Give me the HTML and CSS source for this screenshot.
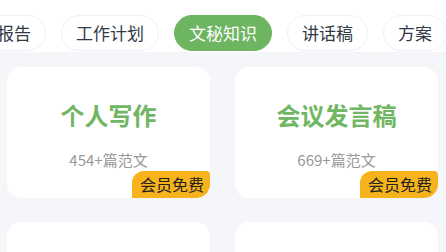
FILE: index.html
```html
<!DOCTYPE html>
<html lang="zh">
<head>
<meta charset="utf-8">
<link rel="stylesheet" href="styles.css">
</head>
<body>
<div class="tabs">
  <div class="tab-row">
    <div class="tab">报告</div>
    <div class="tab">工作计划</div>
    <div class="tab active">文秘知识</div>
    <div class="tab">讲话稿</div>
    <div class="tab">方案</div>
  </div>
</div>
<div class="grid">
  <div class="card">
    <div class="title">个人写作</div>
    <div class="count">454+篇范文</div>
    <div class="badge">会员免费</div>
  </div>
  <div class="card">
    <div class="title">会议发言稿</div>
    <div class="count">669+篇范文</div>
    <div class="badge">会员免费</div>
  </div>
  <div class="card"></div>
  <div class="card"></div>
</div>
</body>
</html>
```
FILE: styles.css
```css
html, body {
  margin: 0;
  padding: 0;
  background: #f5f6fa;
  font-family: "Noto Sans CJK SC", "Noto Sans", sans-serif;
  overflow: hidden;
  height: 252px;
}
.tabs {
  background: #ffffff;
  height: 52px;
  overflow: hidden;
  box-sizing: border-box;
  padding-top: 15px;
}
.tab-row {
  display: flex;
  gap: 15px;
  margin-left: -18px;
  white-space: nowrap;
}
.tab {
  flex: none;
  height: 36px;
  box-sizing: border-box;
  padding: 0 14px;
  border: 1px solid #eef0f3;
  border-radius: 18px;
  font-size: 17px;
  line-height: 34px;
  color: #333a47;
  background: #fff;
}
.tab.active {
  background: #6db561;
  border-color: #6db561;
  color: #ffffff;
}
.grid {
  display: grid;
  grid-template-columns: 203px 203px;
  column-gap: 25px;
  row-gap: 24px;
  padding: 15px 7px 0 7px;
}
.card {
  position: relative;
  height: 131px;
  background: #ffffff;
  border-radius: 14px;
  overflow: hidden;
  display: flex;
  flex-direction: column;
  align-items: center;
}
.title {
  margin-top: 33px;
  font-size: 24px;
  font-weight: 700;
  line-height: 30px;
  color: #70b663;
}
.count {
  margin-top: 20px;
  font-size: 15px;
  line-height: 20px;
  color: #999999;
}
.badge {
  position: absolute;
  right: 0;
  bottom: 0;
  height: 27px;
  padding: 0 6px 0 8px;
  background: #f7b31b;
  border-radius: 12px 4px 0 0;
  font-size: 16px;
  line-height: 27px;
  color: #222222;
}
```
